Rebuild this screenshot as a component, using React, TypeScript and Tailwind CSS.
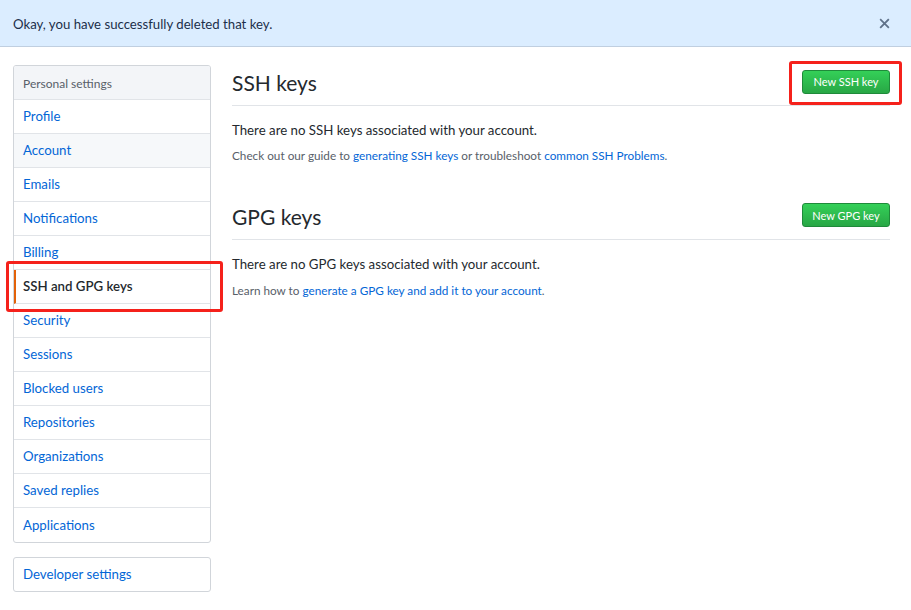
import React from "react";

const items = [
  "Profile",
  "Account",
  "Emails",
  "Notifications",
  "Billing",
  "SSH and GPG keys",
  "Security",
  "Sessions",
  "Blocked users",
  "Repositories",
  "Organizations",
  "Saved replies",
  "Applications",
];

function GreenButton({ children }: { children: React.ReactNode }) {
  return (
    <button className="h-[24px] w-[88px] rounded-[3px] border border-[#1f8a3a] bg-gradient-to-b from-[#34d058] to-[#28a745] text-white text-[11px] font-normal leading-none">
      {children}
    </button>
  );
}

export default function App() {
  return (
    <div
      className="relative w-[911px] h-[610px] bg-white text-[#24292e] overflow-hidden"
      style={{ fontFamily: 'Lato, "Noto Sans", sans-serif' }}
    >
      <div className="h-[47px] bg-[#dbedff] border-b border-[#c0cfe0] flex items-center justify-between pl-[13px] pr-[21px]">
        <span className="pt-[3px] text-[13.2px] text-[#1b2f4a]">Okay, you have successfully deleted that key.</span>
        <svg width="11" height="11" viewBox="0 0 12 12" className="text-[#5f7189]">
          <path d="M2 2 L10 10 M10 2 L2 10" stroke="currentColor" strokeWidth="2" strokeLinecap="square" />
        </svg>
      </div>

      <div className="flex pl-[13px] pr-[21px] pt-[18px] gap-[21px]">
        <div className="w-[198px] shrink-0">
          <div className="border border-[#d1d5da] rounded-[3px] overflow-hidden">
            <div className="h-[34px] bg-[#f3f5f8] border-b border-[#e1e4e8] flex items-center px-[9px] pt-[2px] text-[12px] text-[#586069]">
              Personal settings
            </div>
            {items.map((it, i) => {
              const selected = it === "SSH and GPG keys";
              const last = i === items.length - 1;
              return (
                <div
                  key={it}
                  className={
                    "h-[34px] flex items-center pt-[1px] text-[13.25px] " +
                    (last ? "" : "border-b border-[#e1e4e8] ") +
                    (selected
                      ? "border-l-2 border-l-[#e36209] pl-[7px] font-semibold text-[#24292e]"
                      : "pl-[9px] text-[#0366d6] ") +
                    (it === "Account" ? "bg-[#f6f8fa]" : "")
                  }
                >
                  {it}
                </div>
              );
            })}
          </div>
          <div className="mt-[14px] h-[35px] border border-[#d1d5da] rounded-[3px] flex items-center pl-[9px] text-[13.25px] text-[#0366d6]">
            Developer settings
          </div>
        </div>

        <div className="flex-1">
          <div className="mt-[1px] h-[40px] pb-[8px] border-b border-[#e1e4e8] flex items-center justify-between">
            <h2 className="mt-[2px] text-[21px] font-normal leading-[28px]">SSH keys</h2>
            <GreenButton>New SSH key</GreenButton>
          </div>
          <p className="mt-[14px] text-[13.25px] leading-[21px]">There are no SSH keys associated with your account.</p>
          <p className="mt-[6px] text-[11.75px] leading-[18px] text-[#586069]">
            Check out our guide to <span className="text-[#0366d6]">generating SSH keys</span> or troubleshoot{" "}
            <span className="text-[#0366d6]">common SSH Problems</span>.
          </p>

          <div className="mt-[34px] h-[41px] pb-[8px] border-b border-[#e1e4e8] flex items-center justify-between">
            <h2 className="mt-[3px] text-[21px] font-normal leading-[28px]">GPG keys</h2>
            <GreenButton>New GPG key</GreenButton>
          </div>
          <p className="mt-[14px] text-[13.25px] leading-[21px]">There are no GPG keys associated with your account.</p>
          <p className="mt-[7px] text-[11.75px] leading-[18px] text-[#586069]">
            Learn how to <span className="text-[#0366d6]">generate a GPG key and add it to your account</span>.
          </p>
        </div>
      </div>

      <div className="absolute left-[789px] top-[61px] w-[113px] h-[44px] border-[3px] border-[#f5211b] rounded-[3px]" />
      <div className="absolute left-[6px] top-[261px] w-[217px] h-[51px] border-[3px] border-[#f5211b] rounded-[3px]" />
    </div>
  );
}
